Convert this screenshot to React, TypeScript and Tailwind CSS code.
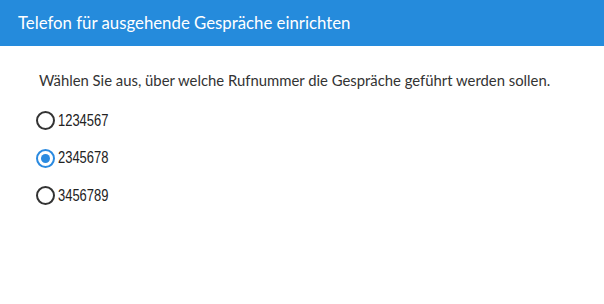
const options = ["1234567", "2345678", "3456789"];

const Radio = ({ checked }: { checked: boolean }) => (
  <span
    className={`flex h-[19px] w-[19px] shrink-0 items-center justify-center rounded-full border-2 ${
      checked ? "border-[#2a8ae0]" : "border-[#333]"
    }`}
  >
    {checked && <span className="h-[9px] w-[9px] rounded-full bg-[#2a8ae0]" />}
  </span>
);

export default function App() {
  return (
    <div className="h-[304px] w-[604px] bg-white font-['Lato',sans-serif]">
      <div className="flex h-[46px] items-center bg-[#258bdc] px-[18px] text-[16.8px] text-white">
        Telefon für ausgehende Gespräche einrichten
      </div>
      <div className="pl-[39px] pt-[23px] text-[14.85px] text-[#333]">
        Wählen Sie aus, über welche Rufnummer die Gespräche geführt werden sollen.
      </div>
      <div className="mt-[20px] flex flex-col gap-[18.5px] pl-[36px]">
        {options.map((o, i) => (
          <label key={o} className="flex h-[19px] items-center gap-[3px]">
            <Radio checked={i === 1} />
            <span className="origin-left scale-x-[0.81] font-['Liberation_Sans',sans-serif] text-[16px] text-[#222]">
              {o}
            </span>
          </label>
        ))}
      </div>
    </div>
  );
}
